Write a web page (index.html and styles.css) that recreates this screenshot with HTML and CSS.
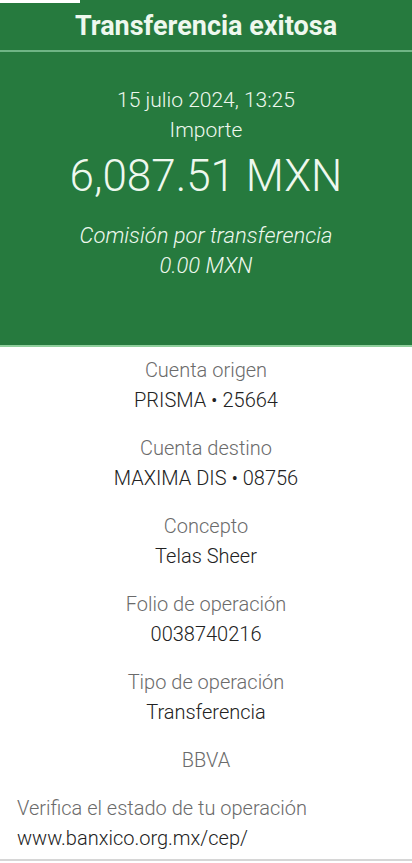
FILE: index.html
```html
<!DOCTYPE html>
<html lang="es">
<head>
    <meta charset="UTF-8">
    <meta name="viewport" content="width=device-width, initial-scale=1.0">
    <title>Transferencia exitosa</title>
    <link rel="stylesheet" href="styles.css">
</head>
<body>
    <div class="summary">
        <div class="status-tab"></div>
        <h1 class="title">Transferencia exitosa</h1>
        <div class="amount-box">
            <div class="date">15 julio 2024, 13:25</div>
            <div class="amount-label">Importe</div>
            <div class="amount">6,087.51 MXN</div>
            <div class="fee">Comisión por transferencia</div>
            <div class="fee">0.00 MXN</div>
        </div>
    </div>
    <div class="details">
        <div class="item">
            <div class="label">Cuenta origen</div>
            <div class="value">PRISMA • 25664</div>
        </div>
        <div class="item">
            <div class="label">Cuenta destino</div>
            <div class="value">MAXIMA DIS • 08756</div>
        </div>
        <div class="item">
            <div class="label">Concepto</div>
            <div class="value">Telas Sheer</div>
        </div>
        <div class="item">
            <div class="label">Folio de operación</div>
            <div class="value">0038740216</div>
        </div>
        <div class="item">
            <div class="label">Tipo de operación</div>
            <div class="value">Transferencia</div>
        </div>
        <div class="item">
            <div class="label">BBVA</div>
        </div>
        <div class="verify">
            <div class="label">Verifica el estado de tu operación</div>
            <div class="value">www.banxico.org.mx/cep/</div>
        </div>
    </div>
</body>
</html>
```

FILE: styles.css
```css
body {
    margin: 0;
    font-family: Roboto, "Liberation Sans", sans-serif;
    background-color: #fff;
    color: #222;
}
.summary {
    background-color: #267a3e;
    color: #eef8ee;
    text-align: center;
    border-bottom: 2px solid #8fcf9c;
}
.status-tab {
    width: 80px;
    height: 3px;
    background: #fff;
}
.title {
    margin: 0;
    height: 47px;
    line-height: 47px;
    font-size: 27px;
    font-weight: 700;
    border-bottom: 2px solid #6fb585;
}
.amount-box {
    padding: 33px 0 64px;
}
.date, .amount-label {
    font-size: 21px;
    font-weight: 300;
    line-height: 30px;
}
.amount {
    margin-top: 3px;
    font-size: 44px;
    font-weight: 300;
    line-height: 56px;
}
.fee {
    font-style: italic;
    font-size: 22px;
    font-weight: 300;
    line-height: 30px;
}
.amount + .fee {
    margin-top: 17px;
}
.details {
    padding-top: 8px;
    border-bottom: 2px solid #d6d6d6;
    padding-bottom: 6px;
}
.item {
    text-align: center;
    margin-bottom: 18px;
}
.label {
    font-size: 20px;
    font-weight: 300;
    line-height: 30px;
    color: #6b6b6b;
}
.value {
    font-size: 20px;
    font-weight: 300;
    line-height: 30px;
    color: #222;
}
.verify {
    text-align: left;
    padding: 0 17px;
    margin-top: 0;
}
```
